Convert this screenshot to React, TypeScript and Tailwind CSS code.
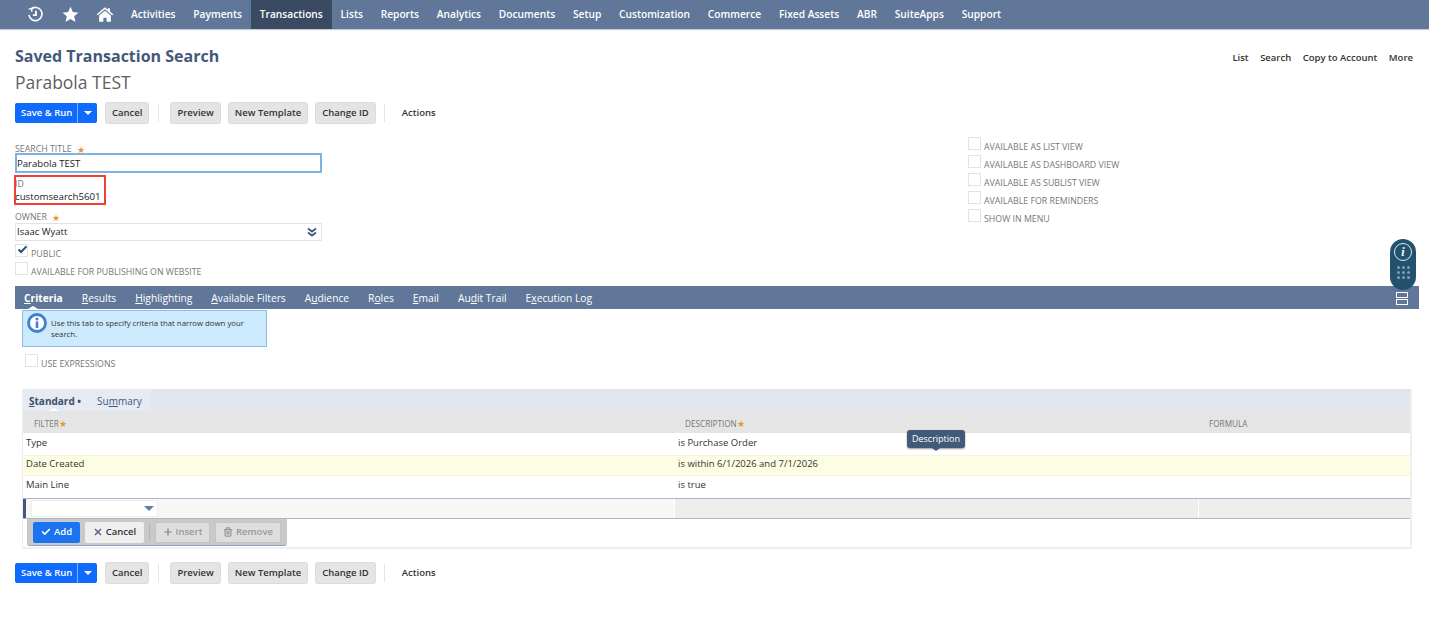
import { Check, Plus, Trash2, X } from "lucide-react";
import type { ReactNode } from "react";

const navItems = [
  "Activities",
  "Payments",
  "Transactions",
  "Lists",
  "Reports",
  "Analytics",
  "Documents",
  "Setup",
  "Customization",
  "Commerce",
  "Fixed Assets",
  "ABR",
  "SuiteApps",
  "Support",
];

const rightChecks = [
  "AVAILABLE AS LIST VIEW",
  "AVAILABLE AS DASHBOARD VIEW",
  "AVAILABLE AS SUBLIST VIEW",
  "AVAILABLE FOR REMINDERS",
  "SHOW IN MENU",
];

const tabs: [string, string, string][] = [
  ["", "R", "esults"],
  ["", "H", "ighlighting"],
  ["", "A", "vailable Filters"],
  ["A", "u", "dience"],
  ["R", "o", "les"],
  ["", "E", "mail"],
  ["Au", "d", "it Trail"],
  ["E", "x", "ecution Log"],
];

function Star() {
  return <span className="text-[9px] leading-none text-[#e8962a]">★</span>;
}

function Box({ checked }: { checked?: boolean }) {
  return (
    <span className="relative block size-[13px] shrink-0 border border-[#e3e3e3] bg-white">
      {checked && (
        <svg viewBox="0 0 14 14" className="absolute -top-[1px] left-[1px] size-[11px]">
          <path d="M2 7l3.2 3.2L12 3" fill="none" stroke="#24507f" strokeWidth="2.6" />
        </svg>
      )}
    </span>
  );
}

function CheckRow({ label, checked }: { label: string; checked?: boolean }) {
  return (
    <div className="flex h-[13px] items-center gap-[3px] whitespace-nowrap text-[8.8px] text-[#777]">
      <Box checked={checked} />
      <span className="translate-y-[4px]">{label}</span>
    </div>
  );
}

function Btn({ children }: { children: ReactNode }) {
  return (
    <button className="h-5 whitespace-nowrap rounded-[2px] bg-[#e4e4e4] px-[6px] text-[9.5px] font-semibold text-[#333] shadow-[0_0_0_1px_#dcdcdc]">
      {children}
    </button>
  );
}

function ActionBar() {
  return (
    <div className="flex h-5 items-center">
      <div className="flex h-5 w-[82px] items-center rounded-[2px] bg-[#0f6bff] text-white">
        <span className="w-[63px] whitespace-nowrap border-r border-[#7fb0ff] pl-[6px] text-[9.5px] font-semibold leading-5">Save &amp; Run</span>
        <span className="mx-auto block size-0 border-x-[4px] border-t-[4px] border-x-transparent border-t-white" />
      </div>
      <div className="ml-[9px] flex">
        <Btn>Cancel</Btn>
      </div>
      <span className="ml-[10px] mr-[12px] h-[18px] w-px bg-[#e6e6e6]" />
      <div className="flex gap-[9px]">
        <Btn>Preview</Btn>
        <Btn>New Template</Btn>
        <Btn>Change ID</Btn>
      </div>
      <span className="ml-[9px] mr-[17px] h-[18px] w-px bg-[#e6e6e6]" />
      <span className="text-[9.5px] font-semibold text-[#333]">Actions</span>
    </div>
  );
}

function HomeIcon() {
  return (
    <svg viewBox="0 0 20 18" className="h-[17px] w-[18px]" fill="white">
      <path d="M10 1L0.8 8.6l1.2 1.2L10 3.3l8 6.5 1.2-1.2L15.5 5.600V2h-2.300v1.700z" />
      <path d="M10 4.800L3.500 10v7h4.700v-4.500h3.600V17h4.700v-7z" />
    </svg>
  );
}

function RecentIcon() {
  return (
    <svg viewBox="0 0 18 18" className="size-[17px]" fill="none" stroke="white" strokeWidth="1.700">
      <path d="M4 3.500A7 7 0 1 1 2 9.500" />
      <path d="M1.800 3.400L5.200 2.600 5 6.200" strokeWidth="1.400" />
      <path d="M9.500 5v4.700H6.200" strokeWidth="1.900" />
    </svg>
  );
}

export default function App() {
  return (
    <div className="relative h-[617px] w-[1429px] overflow-hidden bg-white font-['Open_Sans',sans-serif] text-[#333]">
      {/* top nav */}
      <nav className="flex h-[29px] items-center bg-[#607799] pl-[27px] shadow-[0_1px_1px_#c5ccd8]">
        <RecentIcon />
        <svg viewBox="0 0 20 20" className="ml-[18px] size-[17px]" fill="white">
          <path d="M10 1l2.700 6.200 6.700.6-5.100 4.400 1.600 6.600L10 15.300 4.100 18.800l1.600-6.600L.6 7.800l6.700-.6z" />
        </svg>
        <div className="ml-[17px]">
          <HomeIcon />
        </div>
        <div className="ml-[8px] flex h-full">
          {navItems.map((item) => (
            <a
              key={item}
              className={`flex h-full items-center whitespace-nowrap px-[8.9px] text-[10.2px] font-semibold text-white ${
                item === "Transactions" ? "bg-[#3a4a63]" : ""
              }`}
            >
              {item}
            </a>
          ))}
        </div>
      </nav>

      <div className="flex items-start justify-between pl-[15px] pr-[16px] pt-[16px]">
        <div>
          <h1 className="text-[16px] font-bold leading-[23px] text-[#44587a]">Saved Transaction Search</h1>
          <div className="mt-[2px] text-[17.500px] leading-[24px] text-[#5f5f5f]">Parabola TEST</div>
        </div>
        <div className="mt-[6px] flex gap-[11.500px] text-[9.500px] font-semibold text-[#333]">
          <a>List</a>
          <a>Search</a>
          <a>Copy to Account</a>
          <a>More</a>
        </div>
      </div>

      <div className="ml-[15px] mt-[9px]">
        <ActionBar />
      </div>

      {/* main fields */}
      <div className="mt-[14px] flex h-[149px] pl-[15px]">
        <div className="w-[307px] pt-[7px]">
          <div className="flex h-[9px] translate-y-[1px] items-center gap-[5px] text-[8.800px] leading-none text-[#777]">
            SEARCH TITLE <Star />
          </div>
          <div className="flex h-[20px] items-center border-2 border-[#7db2e3] pt-[2px] text-[9.600px] text-[#222]">
            Parabola TEST
          </div>
          <div className="relative mt-[2px] h-[32px]">
            <div className="absolute -left-[1px] top-0 h-[30px] w-[92px] border-2 border-[#ef4135]" />
            <div className="pt-[4px] text-[8.800px] leading-[10px] text-[#777]">ID</div>
            <div className="text-[9.700px] leading-[15px] text-[#222]">customsearch5601</div>
          </div>
          <div className="mt-[5px] flex h-[9px] translate-y-[1px] items-center gap-[5px] text-[8.800px] leading-none text-[#777]">
            OWNER <Star />
          </div>
          <div className="mt-[2px] flex h-[18px] items-center justify-between border border-[#e3e3e3] pl-[1px] pr-[4px] text-[9.500px] text-[#222]">
            Isaac Wyatt
            <svg viewBox="0 0 10 10" className="size-[10px]" fill="none" stroke="#44587a" strokeWidth="1.800">
              <path d="M1 1.500l4 3 4-3M1 5.500l4 3 4-3" />
            </svg>
          </div>
          <div className="mt-[3px]">
            <CheckRow label="PUBLIC" checked />
          </div>
          <div className="mt-[5px]">
            <CheckRow label="AVAILABLE FOR PUBLISHING ON WEBSITE" />
          </div>
        </div>
        <div className="ml-[646px] flex flex-col gap-[5px]">
          {rightChecks.map((label) => (
            <CheckRow key={label} label={label} />
          ))}
        </div>
      </div>

      {/* tab bar */}
      <div className="relative ml-[15px] flex h-[23px] w-[1404px] items-center bg-[#607799] pl-[9px] pt-[2px] text-[10.250px] text-white">
        <span className="mr-[19px] font-bold">
          <u>C</u>riteria
        </span>
        <div className="flex gap-[19px]">
          {tabs.map(([before, key, after]) => (
            <span key={before + key + after} className="whitespace-nowrap">
              {before}
              <u>{key}</u>
              {after}
            </span>
          ))}
        </div>
        <span className="absolute bottom-0 left-[13px] size-0 border-x-[5px] border-b-[3px] border-x-transparent border-b-white" />
        <div className="absolute right-[11px] top-[6px] flex flex-col gap-px">
          <span className="block h-[6px] w-[12px] border border-white" />
          <span className="block h-[6px] w-[12px] border border-white" />
        </div>
      </div>

      {/* criteria tab */}
      <div className="ml-[22px] mt-px flex h-[37px] w-[245px] items-start border border-[#8cbcea] bg-[#cdeafd] pl-[4px] pt-[2px]">
        <svg viewBox="0 0 20 20" className="size-[20px] shrink-0">
          <circle cx="10" cy="10" r="8.500" fill="white" stroke="#3f7fd0" strokeWidth="2.800" />
          <circle cx="10" cy="6" r="1.500" fill="#3f7fd0" />
          <rect x="8.700" y="8.500" width="2.600" height="6.500" fill="#3f7fd0" />
        </svg>
        <p className="ml-[4px] mt-[5px] w-[205px] text-[7.800px] leading-[11px] text-[#333]">
          Use this tab to specify criteria that narrow down your search.
        </p>
      </div>
      <div className="ml-[25px] mt-[7px]">
        <CheckRow label="USE EXPRESSIONS" />
      </div>

      {/* sublist */}
      <div className="ml-[22px] mt-[22px] h-[160px] w-[1390px] border-b-2 border-l border-r-2 border-[#eeeeee]">
        <div className="flex h-[22px] bg-[#dfe6f0]">
          <div className="relative flex w-[128px] items-center whitespace-nowrap bg-[#e6ebf3] pl-[6px] pt-[2px] text-[10px]">
            <span className="w-[68px] font-bold text-[#3d4f6b]">
              <u>S</u>tandard •
            </span>
            <span className="text-[#44587a]">
              Su<u>m</u>mary
            </span>
            <span className="absolute bottom-0 left-[26px] size-0 border-x-[5px] border-b-[3px] border-x-transparent border-b-white" />
          </div>
        </div>
        <div className="grid h-[22px] grid-cols-[651px_524px_1fr] items-center bg-[#e5e5e5] pt-[4px] text-[8.200px] text-[#777]">
          <span className="pl-[11px]">
            FILTER<Star />
          </span>
          <span className="pl-[11px]">
            DESCRIPTION<Star />
          </span>
          <span className="pl-[11px]">FORMULA</span>
        </div>
        <div className="grid h-[22px] grid-cols-[651px_524px_1fr] items-center pb-[2px] text-[9.500px] text-[#333]">
          <span className="pl-[3px]">Type</span>
          <span className="pl-[4px]">is Purchase Order</span>
        </div>
        <div className="grid h-[21px] grid-cols-[651px_524px_1fr] items-center border-y border-[#f3f3e0] bg-[#fdfde3] pb-[2px] text-[9.500px] text-[#333]">
          <span className="pl-[3px]">Date Created</span>
          <span className="pl-[4px]">is within 6/1/2026 and 7/1/2026</span>
        </div>
        <div className="grid h-[21px] grid-cols-[651px_524px_1fr] items-center pb-[2px] text-[9.500px] text-[#333]">
          <span className="pl-[3px]">Main Line</span>
          <span className="pl-[4px]">is true</span>
        </div>
        {/* edit row */}
        <div className="mt-px grid h-[21px] grid-cols-[651px_524px_1fr] border-y border-[#a9b7cc] bg-[#f7f7f7]">
          <div className="flex items-center border-l-[3px] border-[#44587a] pl-[5px]">
            <div className="flex h-[17px] w-[127px] items-center justify-end border border-[#eeeeee] bg-white pr-[3px]">
              <span className="block size-0 border-x-[5px] border-t-[5px] border-x-transparent border-t-[#5f7fa8]" />
            </div>
          </div>
          <div className="border-l border-white bg-[#eeeeee]" />
          <div className="border-l border-white bg-[#eeeeee]" />
        </div>
        <div className="ml-[4px] flex h-[27px] w-[260px] items-center gap-[5px] rounded-b-[3px] border-b border-[#8fa2bd] bg-[#c9c9c9] pl-[6px] text-[9.500px] font-semibold">
          <button className="flex h-[21px] w-[47px] items-center justify-center gap-[3px] rounded-[2px] bg-[#1a73f0] text-white">
            <Check size={10} strokeWidth={4} />
            Add
          </button>
          <button className="flex h-[21px] w-[59px] items-center justify-center gap-[3px] rounded-[2px] bg-[#efefef] text-[#333]">
            <X size={10} strokeWidth={4} className="text-[#5b6b82]" />
            Cancel
          </button>
          <span className="h-5 w-px bg-[#b5b5b5]" />
          <button className="flex h-[21px] w-[55px] items-center justify-center gap-[3px] rounded-[2px] border border-[#c4c4c4] bg-[#dedede] text-[#999]">
            <Plus size={10} strokeWidth={4} />
            Insert
          </button>
          <button className="flex h-[21px] w-[66px] items-center justify-center gap-[3px] rounded-[2px] border border-[#c4c4c4] bg-[#dedede] text-[#999]">
            <Trash2 size={10} strokeWidth={3} />
            Remove
          </button>
        </div>
      </div>

      <div className="ml-[15px] mt-[14px]">
        <ActionBar />
      </div>

      {/* tooltip */}
      <div className="absolute left-[907px] top-[430px] flex h-[18px] w-[58px] items-center justify-center rounded-[3px] bg-[#42597a] text-[9px] text-white shadow-[0_1px_2px_rgba(0,0,0,0.4)]">
        Description
        <span className="absolute -bottom-[3px] left-[25px] size-0 border-x-[4px] border-t-[3px] border-x-transparent border-t-[#42597a]" />
      </div>

      {/* floating help widget */}
      <div className="absolute left-[1390px] top-[239px] flex h-[51px] w-[26px] flex-col items-center rounded-[13px] bg-[#23526e] pt-[4px]">
        <span className="flex size-[18px] items-center justify-center rounded-full border-[1.5px] border-[#dfe8ee] font-['Liberation_Serif',serif] text-[12px] font-bold italic leading-none text-white">
          i
        </span>
        <div className="mt-[5px] grid grid-cols-3 gap-[2px]">
          {Array.from({ length: 9 }).map((_, i) => (
            <span key={i} className="size-[3px] rounded-full bg-[#7f9fb2]" />
          ))}
        </div>
      </div>
    </div>
  );
}
